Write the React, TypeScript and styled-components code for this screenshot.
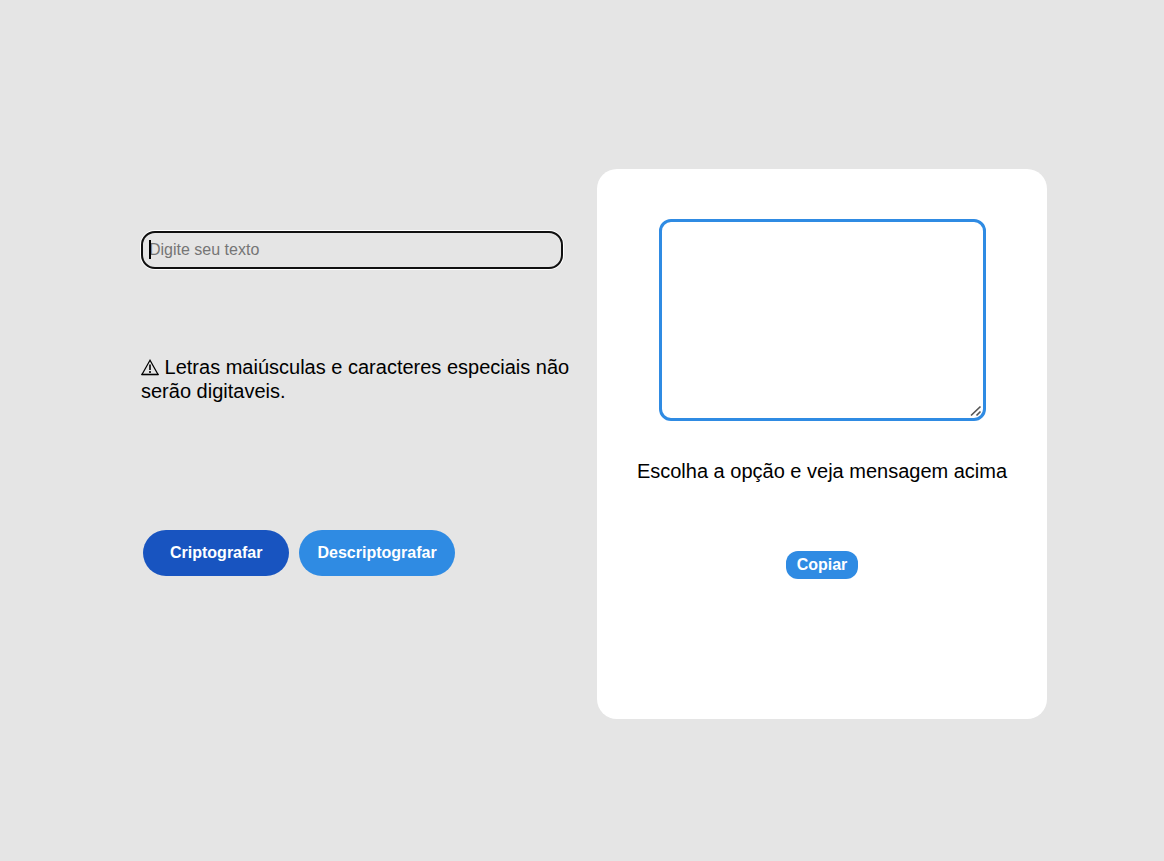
import React, { useState } from "react";
import styled, { createGlobalStyle } from "styled-components";

const GlobalStyle = createGlobalStyle`
  * { box-sizing: border-box; }
  body {
    margin: 0;
    background: #e5e5e5;
    color: #000;
    font-family: Arial, "Liberation Sans", sans-serif;
  }
`;

const Page = styled.main`
  display: flex;
  align-items: center;
  justify-content: center;
  min-height: 100vh;
  padding: 26px 117px 0;
`;

const Editor = styled.section`
  flex: 1;
  display: flex;
  flex-direction: column;
  align-items: flex-start;
  padding: 0 24px 80px;
`;

const Field = styled.div`
  position: relative;
  width: 422px;
  max-width: 100%;
`;

const TextInput = styled.input`
  display: block;
  width: 100%;
  height: 38px;
  padding: 0 6px;
  border: 2px solid #101010;
  border-radius: 14px;
  outline: none;
  box-shadow: 0 0 0 1px #fff;
  background: transparent;
  font: 16px "Liberation Sans", sans-serif;
  caret-color: transparent;
  &::placeholder { color: #757575; opacity: 1; }
`;

const Caret = styled.span`
  position: absolute;
  top: 9px;
  left: 8px;
  width: 2px;
  height: 19px;
  background: #000;
  pointer-events: none;
`;

const Message = styled.p`
  margin: 0;
  font-size: 20px;
  line-height: 24px;
`;

const Notice = styled(Message)`
  margin: 86px 0 127px;
`;

const WarningIcon = styled.svg`
  width: 18px;
  height: 17px;
  vertical-align: -2px;
`;

const Actions = styled.div`
  display: flex;
  gap: 10px;
  padding-left: 2px;
`;

const Button = styled.button`
  border: 0;
  background: #2f8be3;
  color: #fff;
  font: bold 16px "Liberation Sans", sans-serif;
  cursor: pointer;
`;

const ActionButton = styled(Button)<{ $dark?: boolean }>`
  height: 46px;
  padding: 0 ${(p) => (p.$dark ? 27 : 18)}px;
  border-radius: 23px;
  background: ${(p) => (p.$dark ? "#1854c0" : "#2f8be3")};
`;

const CopyButton = styled(Button)`
  height: 28px;
  padding: 0 11px;
  border-radius: 12px;
`;

const Card = styled.section`
  display: flex;
  flex-direction: column;
  align-items: center;
  flex: 0 0 450px;
  min-height: 550px;
  padding: 50px 24px;
  border-radius: 20px;
  background: #fff;
`;

const OutputFrame = styled.div`
  position: relative;
  width: 327px;
  max-width: 100%;
`;

const Output = styled.textarea`
  display: block;
  width: 100%;
  height: 202px;
  padding: 8px;
  border: 3px solid #2f8be3;
  border-radius: 12px;
  outline: none;
  resize: none;
  background: #fff;
  font: 16px "Liberation Sans", sans-serif;
`;

const Grip = styled.svg`
  position: absolute;
  right: 4px;
  bottom: 4px;
  width: 12px;
  height: 12px;
  pointer-events: none;
`;

const Hint = styled(Message)`
  margin: 38px 0 68px;
`;

const pairs = [["e", "enter"], ["i", "imes"], ["a", "ai"], ["o", "ober"], ["u", "ufat"]];

const encrypt = (text: string) =>
  text.replace(/[eiaou]/g, (c) => pairs.find(([k]) => k === c)![1]);

const decrypt = (text: string) =>
  pairs.reduce((acc, [k, v]) => acc.split(v).join(k), text);

export default function App() {
  const [text, setText] = useState("");
  const [result, setResult] = useState("");

  return (
    <>
      <GlobalStyle />
      <Page>
        <Editor>
          <Field>
            <TextInput
              aria-label="Digite seu texto"
              placeholder="Digite seu texto"
              value={text}
              onChange={(e) => setText(e.target.value.replace(/[^a-z\s]/g, ""))}
            />
            {text === "" && <Caret />}
          </Field>
          <Notice>
            <WarningIcon viewBox="0 0 18 17" fill="none" stroke="#000" aria-hidden="true">
              <path d="M9 1.2 1 15.5H17Z" strokeWidth="1.2" />
              <path d="M0.5 15.5H17.5" strokeWidth="1.6" />
              <path d="M9 5.5V11M9 12V14" strokeWidth="1.6" />
            </WarningIcon>{" "}
            Letras maiúsculas e caracteres especiais não serão digitaveis.
          </Notice>
          <Actions>
            <ActionButton $dark type="button" onClick={() => setResult(encrypt(text))}>
              Criptografar
            </ActionButton>
            <ActionButton type="button" onClick={() => setResult(decrypt(text))}>
              Descriptografar
            </ActionButton>
          </Actions>
        </Editor>
        <Card>
          <OutputFrame>
            <Output aria-label="Mensagem" value={result} onChange={(e) => setResult(e.target.value)} />
            <Grip viewBox="0 0 12 12" fill="none" stroke="#555" strokeWidth="1.7" aria-hidden="true">
              <path d="M1 10.5 10.5 1.5M6.5 10.5 10.5 6.5" />
            </Grip>
          </OutputFrame>
          <Hint>Escolha a opção e veja mensagem acima</Hint>
          <CopyButton type="button" onClick={() => navigator.clipboard?.writeText(result)}>
            Copiar
          </CopyButton>
        </Card>
      </Page>
    </>
  );
}
